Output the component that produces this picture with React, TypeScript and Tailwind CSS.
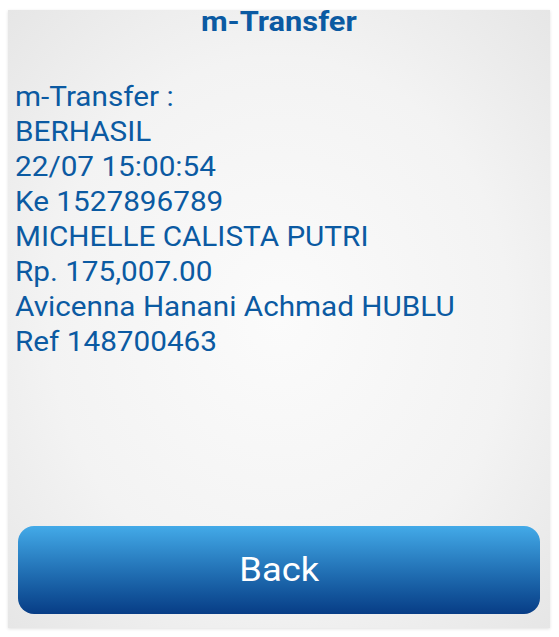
const lines = [
  "m-Transfer :",
  "BERHASIL",
  "22/07 15:00:54",
  "Ke 1527896789",
  "MICHELLE CALISTA PUTRI",
  "Rp. 175,007.00",
  "Avicenna Hanani Achmad HUBLU",
  "Ref 148700463",
];

export default function App() {
  return (
    <div className="w-[559px] h-[637px] bg-white pt-[10px] pl-[8px] font-['Roboto',sans-serif]">
      <div className="w-[542px] h-[618px] flex flex-col bg-[radial-gradient(ellipse_at_center,_#fbfbfb_0%,_#f3f3f3_60%,_#e6e6e6_100%)] shadow-[0_1px_3px_rgba(0,0,0,0.12)]">
        <h1 className="text-center text-[28px] leading-[24px] font-bold text-[#0b5aa2]">
          <span className="inline-block scale-x-[1.1]">m-Transfer</span>
        </h1>
        <div className="self-start ml-[7px] mt-[46px] flex flex-col text-[27px] leading-[35px] text-[#0b5aa2] origin-left scale-x-[1.1]">
          {lines.map((l, i) => (
            <div key={i}>{l}</div>
          ))}
        </div>
        <div className="mt-auto px-[10px] pb-[14px]">
          <button className="w-full h-[88px] rounded-[16px] bg-gradient-to-b from-[#43aae8] to-[#083d86] text-white">
            <span className="inline-block text-[33px] scale-x-[1.1]">Back</span>
          </button>
        </div>
      </div>
    </div>
  );
}
